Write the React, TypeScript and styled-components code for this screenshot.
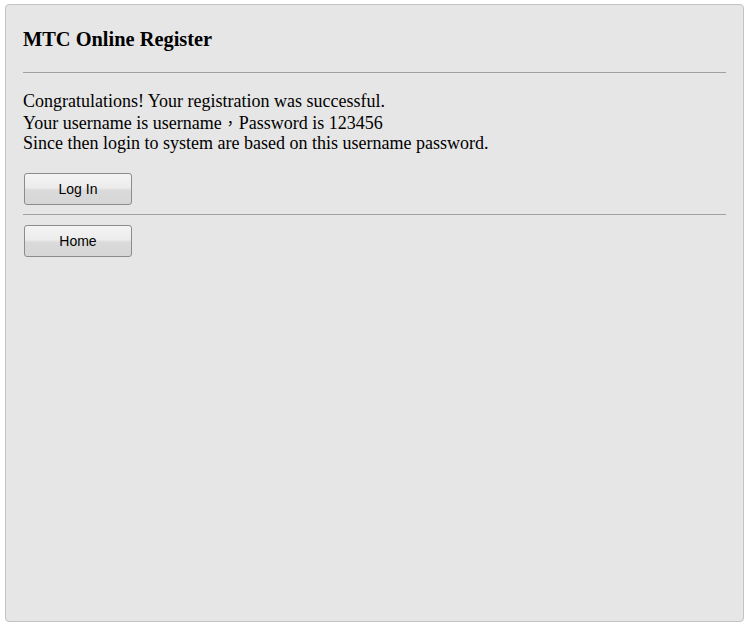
import React from "react";
import styled, { createGlobalStyle } from "styled-components";

const Global = createGlobalStyle`
  html, body { margin: 0; padding: 0; background: #ffffff; }
  body { font-family: "Liberation Serif", "Times New Roman", serif; }
`;

const Panel = styled.div`
  box-sizing: border-box;
  margin: 4px 0 0 5px;
  width: 739px;
  height: 618px;
  background: #e6e6e6;
  border: 1px solid #c3c3c3;
  border-radius: 4px;
  padding: 22px 17px 0 17px;
`;

const Title = styled.h3`
  margin: 0;
  font-family: "Liberation Serif", "Times New Roman", serif;
  font-weight: bold;
  font-size: 20.4px;
  line-height: 24px;
  color: #000;
`;

const Rule = styled.div<{ $top: number; $bottom: number }>`
  height: 1px;
  background: #a0a0a0;
  margin-top: ${(p) => p.$top}px;
  margin-bottom: ${(p) => p.$bottom}px;
`;

const Message = styled.div`
  font-family: "Liberation Serif", "Times New Roman", "Noto Sans CJK TC", serif;
  font-size: 18px;
  line-height: 21px;
  color: #000;
`;

const Line = styled.div`
  height: 21px;
  white-space: nowrap;
`;

const Comma = styled.span`
  font-family: "Noto Sans CJK TC", sans-serif;
  font-size: 15px;
  padding: 0 1px;
`;

const Button = styled.button<{ $top?: number }>`
  display: block;
  box-sizing: border-box;
  margin: ${(p) => p.$top ?? 0}px 0 0 1px;
  width: 108px;
  height: 32px;
  padding: 0 0 1px 0;
  border: 1px solid #8c8c8c;
  border-radius: 3px;
  background: linear-gradient(to bottom, #f4f4f4 0%, #ececec 45%, #dadada 55%, #d6d6d6 100%);
  font-family: "Liberation Sans", Arial, sans-serif;
  font-size: 14px;
  color: #000;
  cursor: pointer;
`;

export default function App() {
  return (
    <>
      <Global />
      <Panel>
        <Title>MTC Online Register</Title>
        <Rule $top={21} $bottom={18} />
        <Message>
          <Line>Congratulations! Your registration was successful.</Line>
          <Line>
            Your username is username<Comma>，</Comma>Password is 123456
          </Line>
          <Line>Since then login to system are based on this username password.</Line>
        </Message>
        <Button $top={19}>Log In</Button>
        <Rule $top={9} $bottom={10} />
        <Button>Home</Button>
      </Panel>
    </>
  );
}
